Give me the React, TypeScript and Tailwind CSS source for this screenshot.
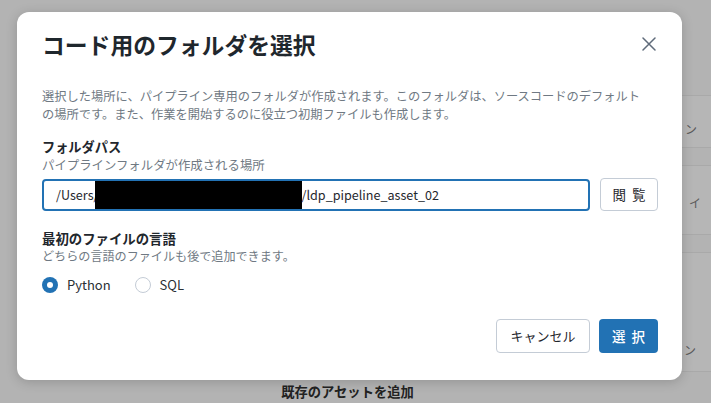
import React from "react";

const font = { fontFamily: '"Noto Sans CJK JP", "Noto Sans", sans-serif' };

export default function App() {
  return (
    <div
      className="relative w-[711px] h-[403px] overflow-hidden bg-[#b3b3b3] text-[#1f272d]"
      style={font}
    >
      {/* background page (under overlay) */}
      <div className="flex flex-col h-full">
        <div className="flex flex-col gap-[17px] pt-[95px] pl-[470px]">
          <div className="w-[280px] h-[53px] rounded-[8px] border border-[#a9a9a9] bg-[#b6b6b6] flex items-center pl-[214px] pt-[14px] text-[12px] text-[#5a5a5a]">
            ン
          </div>
          <div className="w-[280px] h-[70px] rounded-[8px] border border-[#a9a9a9] bg-[#b6b6b6] flex items-center pl-[218px] pt-[6px] text-[12px] text-[#5a5a5a]">
            イ
          </div>
          <div className="w-[280px] h-[120px] rounded-[8px] border border-[#a9a9a9] bg-[#b6b6b6] flex items-end pl-[213px] pb-[12px] text-[12px] text-[#5a5a5a]">
            ン
          </div>
        </div>
        <div className="mt-auto flex justify-center pr-[16px] pb-[2px]">
          <span className="text-[13.3px] font-bold leading-[18px] text-[#222]">既存のアセットを追加</span>
        </div>
      </div>

      {/* modal */}
      <div className="absolute left-[17px] top-[12px] w-[665px] h-[368px] bg-white rounded-[12px] shadow-[0_2px_12px_rgba(0,0,0,0.18)] flex flex-col pl-[25px] pr-[24px] pt-[18px]">
        <div className="flex items-center justify-between">
          <h1 className="text-[22.8px] font-bold leading-[30px] text-[#1f272d]">コード用のフォルダを選択</h1>
          <svg width="14" height="14" viewBox="0 0 14 14" className="mr-[2px] mt-[-3px]" fill="none">
            <path d="M1 1 L13 13 M13 1 L1 13" stroke="#5f6b7a" strokeWidth="1.5" strokeLinecap="round" />
          </svg>
        </div>

        <p className="mt-[27px] text-[12.25px] leading-[18px] text-[#6f7983]">
          選択した場所に、パイプライン専用のフォルダが作成されます。このフォルダは、ソースコードのデフォルト
          <br />
          の場所です。また、作業を開始するのに役立つ初期ファイルも作成します。
        </p>

        <div className="mt-[15px] text-[13.2px] font-bold leading-[18px]">フォルダパス</div>
        <div className="text-[12.4px] leading-[18px] text-[#6f7983]">パイプラインフォルダが作成される場所</div>

        <div className="mt-[4px] flex items-end gap-[10px]">
          <div className="w-[548px] h-[32px] rounded-[4px] border-2 border-[#2272b4] flex items-center pl-[12px] text-[12.6px] text-[#1f272d] overflow-hidden">
            <span>/Users/</span>
            <span className="inline-block w-[207px] h-[29px] bg-black -ml-[4px]" />
            <span>/ldp_pipeline_asset_02</span>
          </div>
          <button className="w-[58px] h-[33px] rounded-[4px] border border-[#c4ccd6] bg-white text-[13.5px] text-[#1f272d] flex items-center justify-center gap-[6px]">
            <span>閲</span>
            <span>覧</span>
          </button>
        </div>

        <div className="mt-[18px] text-[13.4px] font-bold leading-[18px]">最初のファイルの言語</div>
        <div className="text-[12.1px] leading-[18px] text-[#6f7983]">どちらの言語のファイルも後で追加できます。</div>

        <div className="mt-[10px] flex items-center h-[20px] text-[13px] text-[#2a2f34]">
          <span className="w-[16px] h-[16px] rounded-full bg-[#2272b4] flex items-center justify-center">
            <span className="w-[6px] h-[6px] rounded-full bg-white" />
          </span>
          <span className="ml-[9px]">Python</span>
          <span className="ml-[24px] w-[16px] h-[16px] rounded-full border border-[#c4ccd6] bg-white" />
          <span className="ml-[9px]">SQL</span>
        </div>

        <div className="mt-[24px] flex justify-end gap-[9px]">
          <button className="w-[94px] h-[34px] rounded-[4px] border border-[#c4ccd6] bg-white text-[13px] text-[#1f272d] flex items-center justify-center">
            キャンセル
          </button>
          <button className="w-[59px] h-[34px] rounded-[4px] bg-[#2272b4] text-white text-[13.5px] font-medium flex items-center justify-center gap-[6px]">
            <span>選</span>
            <span>択</span>
          </button>
        </div>
      </div>
    </div>
  );
}
